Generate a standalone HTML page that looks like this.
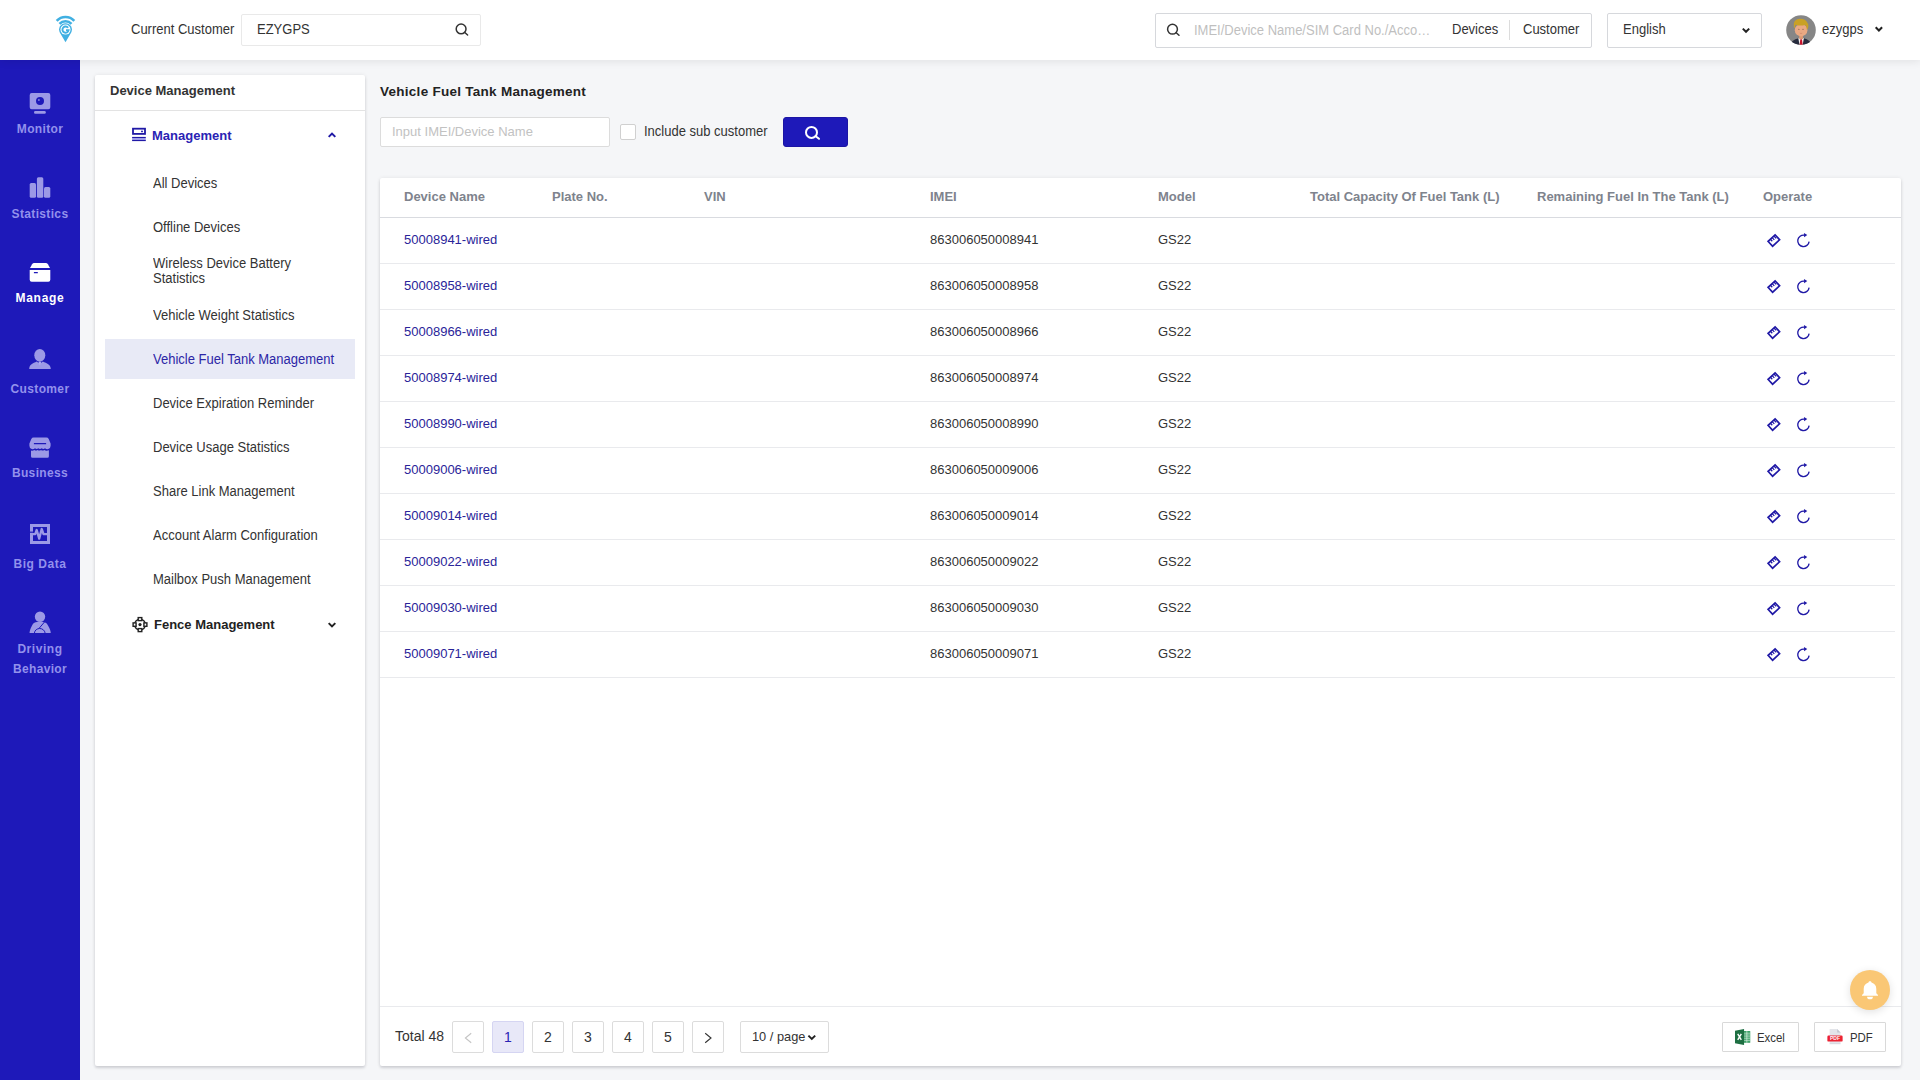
<!DOCTYPE html>
<html>
<head>
<meta charset="utf-8">
<title>Vehicle Fuel Tank Management</title>
<style>
*{box-sizing:border-box;margin:0;padding:0}
html,body{width:1920px;height:1080px;overflow:hidden}
body{font-family:"Liberation Sans",sans-serif;font-size:14px;color:#333;background:#f5f6f8;position:relative}
.abs{position:absolute}
/* top bar */
#top{position:absolute;left:0;top:0;width:1920px;height:60px;background:#fff;box-shadow:0 2px 8px rgba(0,0,0,.08);z-index:5}
#top .lbl{position:absolute;left:131px;top:21px;font-size:14px;color:#333;line-height:16px;transform:scaleX(.9286);transform-origin:0 50%;white-space:nowrap}
#cust{position:absolute;left:241px;top:14px;width:240px;height:32px;border:1px solid #e9e9e9;border-radius:2px;background:#fff}
#cust span{position:absolute;left:15px;top:6px;font-size:14px;line-height:16px;color:#333;transform:scaleX(.9286);transform-origin:0 50%;white-space:nowrap}
#gsearch{position:absolute;left:1155px;top:13px;width:437px;height:35px;border:1px solid #d6d8dc;border-radius:2px;background:#fff}
#gsearch .ph{position:absolute;left:38px;top:8px;font-size:14px;line-height:16px;color:#bfbfbf;transform:scaleX(.9286);transform-origin:0 50%;white-space:nowrap}
#gsearch .t1{position:absolute;left:296px;top:7px;font-size:14px;line-height:16px;color:#333;transform:scaleX(.9286);transform-origin:0 50%;white-space:nowrap}
#gsearch .t2{position:absolute;left:367px;top:7px;font-size:14px;line-height:16px;color:#333;transform:scaleX(.9286);transform-origin:0 50%;white-space:nowrap}
#gsearch .sep{position:absolute;left:353px;top:6px;width:1px;height:20px;background:#dcdcdc}
#lang{position:absolute;left:1607px;top:13px;width:155px;height:35px;border:1px solid #d6d8dc;border-radius:2px;background:#fff}
#lang span{position:absolute;left:15px;top:7px;font-size:14px;line-height:16px;color:#333;transform:scaleX(.9286);transform-origin:0 50%;white-space:nowrap}
#user{position:absolute;left:1822px;top:21px;font-size:14px;line-height:16px;color:#333;transform:scaleX(.9286);transform-origin:0 50%;white-space:nowrap}
/* sidebar */
#side{position:absolute;left:0;top:60px;width:80px;height:1020px;background:#1e19b9}
.nav{position:absolute;left:0;width:80px;text-align:center;font-weight:bold;font-size:12px;letter-spacing:.35px;color:#9391ec;line-height:20px}
.nav.on{color:#fff}
.nav svg{position:absolute;left:26px}
/* left panel */
#lp{position:absolute;left:95px;top:75px;width:270px;height:991px;background:#fff;border-radius:2px;box-shadow:0 2px 3px rgba(0,10,30,.14),0 0 4px rgba(0,10,30,.07)}
#lp .hd{position:absolute;left:0;top:0;width:270px;height:36px;border-bottom:1px solid #e3e3e3}
#lp .hd span{position:absolute;left:15px;top:8px;font-size:13px;font-weight:bold;line-height:16px;color:#333}
.mi{position:absolute;left:58px;font-size:14px;line-height:15px;color:#333;white-space:nowrap;transform:scaleX(.9286);transform-origin:0 50%}
.grp{position:absolute;font-size:13px;font-weight:bold;line-height:16px}
#sel{position:absolute;left:10px;top:264px;width:250px;height:40px;background:#e8eaf6}
/* main */
#title{position:absolute;left:380px;top:84px;font-size:13.500px;letter-spacing:.27px;font-weight:bold;line-height:16px;color:#222;white-space:nowrap}
#inp{position:absolute;left:380px;top:117px;width:230px;height:30px;border:1px solid #dcdcdc;border-radius:2px;background:#fff}
#inp span{position:absolute;left:11px;top:6px;font-size:13px;line-height:15px;color:#c2c2c2;white-space:nowrap}
#cb{position:absolute;left:620px;top:124px;width:15.500px;height:15.500px;border:1px solid #d0d0d0;border-radius:2px;background:#fff}
#cbl{position:absolute;left:644px;top:124px;font-size:14px;line-height:15px;color:#333;transform:scaleX(.9286);transform-origin:0 50%;white-space:nowrap}
#sbtn{position:absolute;left:783px;top:117px;width:65px;height:30px;background:#1e19b9;border:1px solid #1c15a4;border-radius:3px}
#card{position:absolute;left:380px;top:178px;width:1521px;height:888px;background:#fff;border-radius:2px;box-shadow:0 2px 3px rgba(0,10,30,.14),0 0 4px rgba(0,10,30,.07)}
.th{position:absolute;top:11px;font-size:13px;font-weight:bold;line-height:16px;color:#7e838d;white-space:nowrap}
#hline{position:absolute;left:0;top:39px;width:1521px;height:1px;background:#d9dbe0}
.row{position:absolute;left:0;width:1515px;height:46px;border-bottom:1px solid #e9eaed}
.row span{position:absolute;top:14px;font-size:13px;line-height:16px;white-space:nowrap}
.row .dn{left:24px;color:#2a2499}
.row .im{left:550px;color:#333}
.row .md{left:778px;color:#333}
.row svg{position:absolute;top:14px}.row .i1{left:1386px}.row .i2{left:1415px}
#foot{position:absolute;left:0;top:828px;width:1521px;height:60px;border-top:1px solid #e9eaed}
.pg{position:absolute;top:14px;width:32px;height:32px;border:1px solid #dcdcdc;border-radius:2px;background:#fff;text-align:center;font-size:14px;line-height:30px;color:#333}
.pg.on{background:#e8e8f8;border-color:#d5d5f2;color:#2a23b4}
.btn{position:absolute;top:15px;height:30px;border:1px solid #d9d9d9;border-radius:1px;background:#fff}
.btn span{position:absolute;top:8px;font-size:12px;line-height:15px;color:#333;transform:scaleX(.95);transform-origin:0 50%}
#bell{position:absolute;left:1850px;top:970px;width:40px;height:40px;border-radius:20px;background:#fac775;box-shadow:0 2px 8px rgba(0,0,0,.12);z-index:6}
</style>
</head>
<body>
<div id="top">
  <svg style="position:absolute;left:0;top:0;z-index:2" width="1920" height="60" viewBox="0 0 1920 60">
    <!-- logo -->
    <g fill="none" stroke="#41b0e2" stroke-width="2.600">
      <path d="M56.700 20.900a11.900 11.900 0 0 1 17.600 0"/>
      <path d="M59.500 23.800a8.200 8.200 0 0 1 12 0"/>
    </g>
    <path d="M65.500 42.200l-5.700-9.700a6.400 6.400 0 1 1 11.400 0z" fill="#41b0e2"/>
    <circle cx="65.500" cy="29.600" r="5" fill="#fff"/>
    <path d="M68.100 27.800a3.100 3.100 0 1 0 .5 2.300h-2.600" fill="none" stroke="#41b0e2" stroke-width="1.900"/>
    <!-- customer search icon -->
    <g fill="none" stroke="#333" stroke-width="1.500" stroke-linecap="round">
      <circle cx="461.100" cy="28.900" r="4.900"/><path d="M464.800 32.500l2.800 2.500"/>
      <circle cx="1172.500" cy="29.200" r="4.900"/><path d="M1176.200 32.800l2.800 2.500"/>
    </g>
    <!-- chevrons -->
    <g fill="none" stroke="#222" stroke-width="2">
      <path d="M1742.800 28.600l3.200 3.200 3.200-3.200"/>
      <path d="M1875.700 27.300l3.200 3.200 3.200-3.200"/>
    </g>
    <!-- avatar -->
    <defs><clipPath id="avc"><circle cx="1801" cy="30" r="14.800"/></clipPath></defs>
    <g clip-path="url(#avc)">
      <rect x="1786" y="15" width="30" height="30" fill="#868686"/>
      <path d="M1790.500 46c.2-4.500 3-6.300 8-7.700l2.600 1.200 2.600-1.200c5 1.400 7.300 3.200 7.500 7.700z" fill="#272c3e"/>
      <path d="M1798.300 38.200l2.800-1 2.800 1-1.300 7h-3z" fill="#f4f2f0"/>
      <path d="M1800.300 39.300h1.700l.7 6h-3.100z" fill="#c8142c"/>
      <rect x="1799.200" y="34.500" width="3.800" height="4.600" fill="#dc9a74"/>
      <ellipse cx="1801.100" cy="30.200" rx="6.300" ry="6.200" fill="#eaa983"/><circle cx="1798.900" cy="29.300" r=".550" fill="#6b4a3a"/><circle cx="1803" cy="29.300" r=".550" fill="#6b4a3a"/><path d="M1799.800 33.200q1.200.6 2.400 0" fill="none" stroke="#c4785c" stroke-width=".500"/>
      <path d="M1794.200 27.800c-1.200-5 .3-8.300 4.500-8.900 3.800-.6 7.500.8 8.600 3.900 1.200 1 1.400 3.400.6 5.600l-1.200 1.300c.2-2.300-.5-3.800-1.800-4.700-3.300.9-6.700.7-9.200-.3-.6 1-.9 2-.8 3.600z" fill="#c9a125"/>
    </g>
  </svg>
  <div class="lbl">Current Customer</div>
  <div id="cust"><span>EZYGPS</span></div>
  <div id="gsearch"><span class="ph">IMEI/Device Name/SIM Card No./Acco…</span><span class="t1">Devices</span><i class="sep"></i><span class="t2">Customer</span></div>
  <div id="lang"><span>English</span></div>
  <div id="user">ezygps</div>
</div>
<div id="side">
  <svg style="position:absolute;left:0;top:0" width="80" height="1020" viewBox="0 60 80 1020" fill="#9c99e6">
    <!-- monitor -->
    <path fill-rule="evenodd" d="M31.7 93h16.6a2 2 0 0 1 2 2v12.2a2 2 0 0 1-2 2H31.7a2 2 0 0 1-2-2V95a2 2 0 0 1 2-2zM40 97.1a4 4 0 1 0 0 8 4 4 0 0 0 0-8z"/>
    <circle cx="38.9" cy="99.9" r="1" fill="#7f7cdc"/>
    <rect x="34" y="111.1" width="11.8" height="2.6" rx="1.3"/>
    <!-- statistics -->
    <rect x="29.7" y="183" width="6.3" height="14.8" rx="1.5"/>
    <rect x="36.9" y="177.2" width="6.4" height="20.6" rx="1.5"/>
    <rect x="44" y="187" width="6.3" height="10.8" rx="1.5"/>
    <!-- manage -->
    <g fill="#fff">
      <path d="M30 268l2.1-3.8q.7-1.2 2.1-1.2h11.600q1.400 0 2.100 1.200l2.100 3.800z"/>
      <path fill-rule="evenodd" d="M29.700 270h20.600v9.700a2 2 0 0 1-2 2H31.700a2 2 0 0 1-2-2zM33.900 272v1.200h3.900V272z"/>
    </g>
    <!-- customer -->
    <ellipse cx="39.8" cy="355.300" rx="5.500" ry="6.300"/>
    <path d="M29.200 368.900c.3-4.300 3.500-5.600 7.600-7.300l3 2.300 3-2.300c4.100 1.700 7.700 3 8 7.300z"/>
    <path d="M38.900 361.500h1.800l.5 1.500-1.400 2.400-1.400-2.400z" fill="#aeabee"/>
    <!-- business -->
    <path fill-rule="evenodd" d="M33.600 437.500h12.800q1.600 0 2.300 1.400l1.900 4.600v2.200q0 2.600-2.300 3.400-1.800.5-3.300-.9-1.700 1.500-3.300 0-1.700 1.500-3.400 0-1.600 1.500-3.300 0-1.500 1.400-3.300.9-2.300-.8-2.300-3.400v-2.200l1.900-4.600q.7-1.400 2.300-1.400zM33.900 443v1.200h12.200V443z"/>
    <path d="M31 450.400q1.700.6 3.300-.4 1.600 1.100 3.300 0 1.700 1.100 3.400 0 1.600 1.100 3.300 0 1.600 1 3.300.4l1.300-.1v6a1.500 1.500 0 0 1-1.500 1.500H32.500a1.500 1.500 0 0 1-1.500-1.500z"/>
    <!-- big data -->
    <path fill-rule="evenodd" d="M30 523.900h20v20H30zM33 526.900v14h14v-14z"/>
    <path d="M30 531.600h3.200v1.200H30z" fill="#1e19b9"/>
    <path d="M32.500 534.200h2.700l1.500-4.200 2.500 8.600 2.500-9.600 1.800 5.200h3.800" fill="none" stroke="#9c99e6" stroke-width="2.300" stroke-linejoin="round"/>
    <!-- driving -->
    <circle cx="40" cy="616.700" r="5.200"/>
    <path d="M29.600 633c-.4-1.300 2.300-8.300 4.300-9.900q1.600-1.200 3.100-1.200h6q1.500 0 3.100 1.200c2 1.600 5 8.600 4.600 9.900z"/>
    <path d="M44.600 621.900L39 628.400M34.300 633.300c.8-6.400 9.900-6.400 10.900 0" fill="none" stroke="#1e19b9" stroke-width="1"/>
  </svg>
  <div class="nav" style="top:59px">Monitor</div>
  <div class="nav" style="top:144px">Statistics</div>
  <div class="nav on" style="top:228px;letter-spacing:.7px">Manage</div>
  <div class="nav" style="top:319px">Customer</div>
  <div class="nav" style="top:403px">Business</div>
  <div class="nav" style="top:494px;letter-spacing:.55px">Big Data</div>
  <div class="nav" style="top:579px"><span style="letter-spacing:.55px">Driving</span><br>Behavior</div>
</div>
<div id="lp">
  <svg style="position:absolute;left:0;top:0" width="270" height="991" viewBox="95 75 270 991">
    <g fill="none" stroke="#2019a6" stroke-width="1.800">
      <rect x="133" y="128.700" width="12" height="5.200"/>
    </g>
    <circle cx="142" cy="131.400" r="0.950" fill="#2019a6"/>
    <rect x="132.100" y="138" width="13.700" height="2.100" fill="#9d9bea"/>
    <rect x="132.100" y="136.900" width="13.700" height="1.100" fill="#2019a6"/>
    <rect x="132.100" y="140" width="13.700" height="1.100" fill="#2019a6"/>
    <path d="M328.700 136.900l3.300-3.300 3.300 3.300" fill="none" stroke="#2019a6" stroke-width="2"/>
    <path d="M328.700 623.100l3.300 3.300 3.300-3.300" fill="none" stroke="#222" stroke-width="2"/>
    <!-- fence -->
    <g fill="#fff" stroke="#222" stroke-width="1.400">
      <circle cx="140" cy="624.600" r="5.400" fill="none"/>
      <rect x="138.200" y="617.600" width="3.600" height="3"/>
      <rect x="138.200" y="628.600" width="3.600" height="3"/>
      <rect x="133.100" y="622.900" width="3" height="3.400"/>
      <rect x="143.900" y="622.900" width="3" height="3.400"/>
    </g>
    <circle cx="140" cy="624.600" r="1.600" fill="#222"/>
  </svg>
  <div class="hd"><span>Device Management</span></div>
  <div class="grp" style="left:57px;top:53px;color:#2a23b4">Management</div>
  <div id="sel"></div>
  <div class="mi" style="top:101px">All Devices</div>
  <div class="mi" style="top:145px">Offline Devices</div>
  <div class="mi" style="top:181px">Wireless Device Battery<br>Statistics</div>
  <div class="mi" style="top:233px">Vehicle Weight Statistics</div>
  <div class="mi" style="top:277px;color:#2c26a6">Vehicle Fuel Tank Management</div>
  <div class="mi" style="top:321px">Device Expiration Reminder</div>
  <div class="mi" style="top:365px">Device Usage Statistics</div>
  <div class="mi" style="top:409px">Share Link Management</div>
  <div class="mi" style="top:453px">Account Alarm Configuration</div>
  <div class="mi" style="top:497px">Mailbox Push Management</div>
  <div class="grp" style="left:59px;top:542px;color:#222">Fence Management</div>
</div>
<div id="title">Vehicle Fuel Tank Management</div>
<div id="inp"><span>Input IMEI/Device Name</span></div>
<div id="cb"></div>
<div id="cbl">Include sub customer</div>
<div id="sbtn"><svg style="position:absolute;left:-1px;top:-1px" width="65" height="30" viewBox="783 117 65 30"><g fill="none" stroke="#fff" stroke-width="2" stroke-linecap="round"><circle cx="811.500" cy="132.400" r="5.500"/><path d="M815.700 136.200l3.300 2.600"/></g></svg></div>
<div id="card">
  <div class="th" style="left:24px">Device Name</div>
  <div class="th" style="left:172px">Plate No.</div>
  <div class="th" style="left:324px">VIN</div>
  <div class="th" style="left:550px">IMEI</div>
  <div class="th" style="left:778px">Model</div>
  <div class="th" style="left:930px">Total Capacity Of Fuel Tank (L)</div>
  <div class="th" style="left:1157px">Remaining Fuel In The Tank (L)</div>
  <div class="th" style="left:1383px">Operate</div>
  <div id="hline"></div>
  <div id="rows">
<div class="row" style="top:40px"><span class="dn">50008941-wired</span><span class="im">863006050008941</span><span class="md">GS22</span><svg class="i1" width="16" height="16" viewBox="0 0 16 16"><g transform="translate(7.850 8.550) rotate(-43)" fill="none" stroke="#2019a6" stroke-width="1.700"><rect x="-4.800" y="-3.300" width="9.600" height="6.600"/><path d="M-1.600 -3.300v2.700M.800 -3.300v3.100M3.200 -3.300v3.300" stroke-width="1.250"/></g></svg><svg class="i2" width="16" height="16" viewBox="0 0 16 16"><g transform="translate(.450 .750)"><path d="M13.650 8.800a5.700 5.700 0 1 1-4.650-6.300" fill="none" stroke="#2019a6" stroke-width="1.350"/><path d="M8.500 .300l3.300 2-3.100 2.200z" fill="#2019a6"/></g></svg></div>
<div class="row" style="top:86px"><span class="dn">50008958-wired</span><span class="im">863006050008958</span><span class="md">GS22</span><svg class="i1" width="16" height="16" viewBox="0 0 16 16"><g transform="translate(7.850 8.550) rotate(-43)" fill="none" stroke="#2019a6" stroke-width="1.700"><rect x="-4.800" y="-3.300" width="9.600" height="6.600"/><path d="M-1.600 -3.300v2.700M.800 -3.300v3.100M3.200 -3.300v3.300" stroke-width="1.250"/></g></svg><svg class="i2" width="16" height="16" viewBox="0 0 16 16"><g transform="translate(.450 .750)"><path d="M13.650 8.800a5.700 5.700 0 1 1-4.650-6.300" fill="none" stroke="#2019a6" stroke-width="1.350"/><path d="M8.500 .300l3.300 2-3.100 2.200z" fill="#2019a6"/></g></svg></div>
<div class="row" style="top:132px"><span class="dn">50008966-wired</span><span class="im">863006050008966</span><span class="md">GS22</span><svg class="i1" width="16" height="16" viewBox="0 0 16 16"><g transform="translate(7.850 8.550) rotate(-43)" fill="none" stroke="#2019a6" stroke-width="1.700"><rect x="-4.800" y="-3.300" width="9.600" height="6.600"/><path d="M-1.600 -3.300v2.700M.800 -3.300v3.100M3.200 -3.300v3.300" stroke-width="1.250"/></g></svg><svg class="i2" width="16" height="16" viewBox="0 0 16 16"><g transform="translate(.450 .750)"><path d="M13.650 8.800a5.700 5.700 0 1 1-4.650-6.300" fill="none" stroke="#2019a6" stroke-width="1.350"/><path d="M8.500 .300l3.300 2-3.100 2.200z" fill="#2019a6"/></g></svg></div>
<div class="row" style="top:178px"><span class="dn">50008974-wired</span><span class="im">863006050008974</span><span class="md">GS22</span><svg class="i1" width="16" height="16" viewBox="0 0 16 16"><g transform="translate(7.850 8.550) rotate(-43)" fill="none" stroke="#2019a6" stroke-width="1.700"><rect x="-4.800" y="-3.300" width="9.600" height="6.600"/><path d="M-1.600 -3.300v2.700M.800 -3.300v3.100M3.200 -3.300v3.300" stroke-width="1.250"/></g></svg><svg class="i2" width="16" height="16" viewBox="0 0 16 16"><g transform="translate(.450 .750)"><path d="M13.650 8.800a5.700 5.700 0 1 1-4.650-6.300" fill="none" stroke="#2019a6" stroke-width="1.350"/><path d="M8.500 .300l3.300 2-3.100 2.200z" fill="#2019a6"/></g></svg></div>
<div class="row" style="top:224px"><span class="dn">50008990-wired</span><span class="im">863006050008990</span><span class="md">GS22</span><svg class="i1" width="16" height="16" viewBox="0 0 16 16"><g transform="translate(7.850 8.550) rotate(-43)" fill="none" stroke="#2019a6" stroke-width="1.700"><rect x="-4.800" y="-3.300" width="9.600" height="6.600"/><path d="M-1.600 -3.300v2.700M.800 -3.300v3.100M3.200 -3.300v3.300" stroke-width="1.250"/></g></svg><svg class="i2" width="16" height="16" viewBox="0 0 16 16"><g transform="translate(.450 .750)"><path d="M13.650 8.800a5.700 5.700 0 1 1-4.650-6.300" fill="none" stroke="#2019a6" stroke-width="1.350"/><path d="M8.500 .300l3.300 2-3.100 2.200z" fill="#2019a6"/></g></svg></div>
<div class="row" style="top:270px"><span class="dn">50009006-wired</span><span class="im">863006050009006</span><span class="md">GS22</span><svg class="i1" width="16" height="16" viewBox="0 0 16 16"><g transform="translate(7.850 8.550) rotate(-43)" fill="none" stroke="#2019a6" stroke-width="1.700"><rect x="-4.800" y="-3.300" width="9.600" height="6.600"/><path d="M-1.600 -3.300v2.700M.800 -3.300v3.100M3.200 -3.300v3.300" stroke-width="1.250"/></g></svg><svg class="i2" width="16" height="16" viewBox="0 0 16 16"><g transform="translate(.450 .750)"><path d="M13.650 8.800a5.700 5.700 0 1 1-4.650-6.300" fill="none" stroke="#2019a6" stroke-width="1.350"/><path d="M8.500 .300l3.300 2-3.100 2.200z" fill="#2019a6"/></g></svg></div>
<div class="row" style="top:316px"><span class="dn">50009014-wired</span><span class="im">863006050009014</span><span class="md">GS22</span><svg class="i1" width="16" height="16" viewBox="0 0 16 16"><g transform="translate(7.850 8.550) rotate(-43)" fill="none" stroke="#2019a6" stroke-width="1.700"><rect x="-4.800" y="-3.300" width="9.600" height="6.600"/><path d="M-1.600 -3.300v2.700M.800 -3.300v3.100M3.200 -3.300v3.300" stroke-width="1.250"/></g></svg><svg class="i2" width="16" height="16" viewBox="0 0 16 16"><g transform="translate(.450 .750)"><path d="M13.650 8.800a5.700 5.700 0 1 1-4.650-6.300" fill="none" stroke="#2019a6" stroke-width="1.350"/><path d="M8.500 .300l3.300 2-3.100 2.200z" fill="#2019a6"/></g></svg></div>
<div class="row" style="top:362px"><span class="dn">50009022-wired</span><span class="im">863006050009022</span><span class="md">GS22</span><svg class="i1" width="16" height="16" viewBox="0 0 16 16"><g transform="translate(7.850 8.550) rotate(-43)" fill="none" stroke="#2019a6" stroke-width="1.700"><rect x="-4.800" y="-3.300" width="9.600" height="6.600"/><path d="M-1.600 -3.300v2.700M.800 -3.300v3.100M3.200 -3.300v3.300" stroke-width="1.250"/></g></svg><svg class="i2" width="16" height="16" viewBox="0 0 16 16"><g transform="translate(.450 .750)"><path d="M13.650 8.800a5.700 5.700 0 1 1-4.650-6.300" fill="none" stroke="#2019a6" stroke-width="1.350"/><path d="M8.500 .300l3.300 2-3.100 2.200z" fill="#2019a6"/></g></svg></div>
<div class="row" style="top:408px"><span class="dn">50009030-wired</span><span class="im">863006050009030</span><span class="md">GS22</span><svg class="i1" width="16" height="16" viewBox="0 0 16 16"><g transform="translate(7.850 8.550) rotate(-43)" fill="none" stroke="#2019a6" stroke-width="1.700"><rect x="-4.800" y="-3.300" width="9.600" height="6.600"/><path d="M-1.600 -3.300v2.700M.800 -3.300v3.100M3.200 -3.300v3.300" stroke-width="1.250"/></g></svg><svg class="i2" width="16" height="16" viewBox="0 0 16 16"><g transform="translate(.450 .750)"><path d="M13.650 8.800a5.700 5.700 0 1 1-4.650-6.300" fill="none" stroke="#2019a6" stroke-width="1.350"/><path d="M8.500 .300l3.300 2-3.100 2.200z" fill="#2019a6"/></g></svg></div>
<div class="row" style="top:454px"><span class="dn">50009071-wired</span><span class="im">863006050009071</span><span class="md">GS22</span><svg class="i1" width="16" height="16" viewBox="0 0 16 16"><g transform="translate(7.850 8.550) rotate(-43)" fill="none" stroke="#2019a6" stroke-width="1.700"><rect x="-4.800" y="-3.300" width="9.600" height="6.600"/><path d="M-1.600 -3.300v2.700M.800 -3.300v3.100M3.200 -3.300v3.300" stroke-width="1.250"/></g></svg><svg class="i2" width="16" height="16" viewBox="0 0 16 16"><g transform="translate(.450 .750)"><path d="M13.650 8.800a5.700 5.700 0 1 1-4.650-6.300" fill="none" stroke="#2019a6" stroke-width="1.350"/><path d="M8.500 .300l3.300 2-3.100 2.200z" fill="#2019a6"/></g></svg></div>
</div>
  <div id="foot">
    <span class="abs" style="left:15px;top:21px;font-size:14px;line-height:16px;color:#333">Total 48</span>
    <div class="pg" style="left:72px"><svg style="position:absolute;left:-1px;top:-1px" width="32" height="32"><path d="M19.200 12.300l-5.800 4.700 5.800 4.700" fill="none" stroke="#c4c4c4" stroke-width="1.100"/></svg></div>
    <div class="pg on" style="left:112px">1</div>
    <div class="pg" style="left:152px">2</div>
    <div class="pg" style="left:192px">3</div>
    <div class="pg" style="left:232px">4</div>
    <div class="pg" style="left:272px">5</div>
    <div class="pg" style="left:312px"><svg style="position:absolute;left:-1px;top:-1px" width="32" height="32"><path d="M13.200 12.300l5.800 4.700-5.800 4.700" fill="none" stroke="#333" stroke-width="1.100"/></svg></div>
    <div class="pg" style="left:360px;width:89px;text-align:left;padding-left:11px;font-size:12.800px">10 / page<svg style="position:absolute;left:66px;top:12px" width="10" height="8"><path d="M1.400 1.600l3.400 3.400 3.400-3.400" fill="none" stroke="#222" stroke-width="1.900"/></svg></div>
    <div class="btn" style="left:1342px;width:77px"><svg style="position:absolute;left:12px;top:6px" width="16" height="16" viewBox="0 0 17 17"><rect x="8.500" y="2.200" width="7.700" height="12.400" fill="#2e9a5c"/><path d="M9 4.400h7M9 6.400h7M9 8.400h7M9 10.400h7M9 12.400h7M12.600 2.200v12.400" stroke="#e6f4ec" stroke-width=".7"/><path d="M0 1.900L9.600 0v17L0 15.100z" fill="#1d6f42"/><path d="M2.900 5.300l3.800 6.200M6.700 5.300l-3.800 6.200" stroke="#fff" stroke-width="1.500"/></svg><span style="left:34px">Excel</span></div>
    <div class="btn" style="left:1434px;width:72px"><svg style="position:absolute;left:12px;top:6px" width="16" height="16" viewBox="0 0 17 17"><path d="M2.800 0h8l3.600 3.700V15H2.800z" fill="#e3e5ea"/><path d="M10.800 0l3.600 3.700h-3.600z" fill="#c3c7d0"/><rect x=".4" y="7" width="16.200" height="6.400" rx="1.300" fill="#ec2332"/><path d="M2.800 15.600h11.600" stroke="#c9ccd6" stroke-width=".9"/><text x="8.500" y="12.200" font-family="Liberation Sans" font-size="5.400" font-weight="bold" fill="#fff" text-anchor="middle">PDF</text></svg><span style="left:35px">PDF</span></div>
  </div>
</div>
<div id="bell"><svg width="40" height="40" viewBox="1850 970 40 40"><path d="M1870 981.300c.8 0 1.400.5 1.500 1.300 2.900.8 4.800 3.200 4.800 6.300v4.400l1.700 1.600v.9h-16v-.9l1.700-1.600v-4.400c0-3.100 1.900-5.500 4.800-6.300.1-.8.700-1.300 1.500-1.300z" fill="#fff"/><path d="M1867.100 996.700h5.800a2.900 2.600 0 0 1-5.800 0z" fill="#fff"/></svg></div>
</body>
</html>
